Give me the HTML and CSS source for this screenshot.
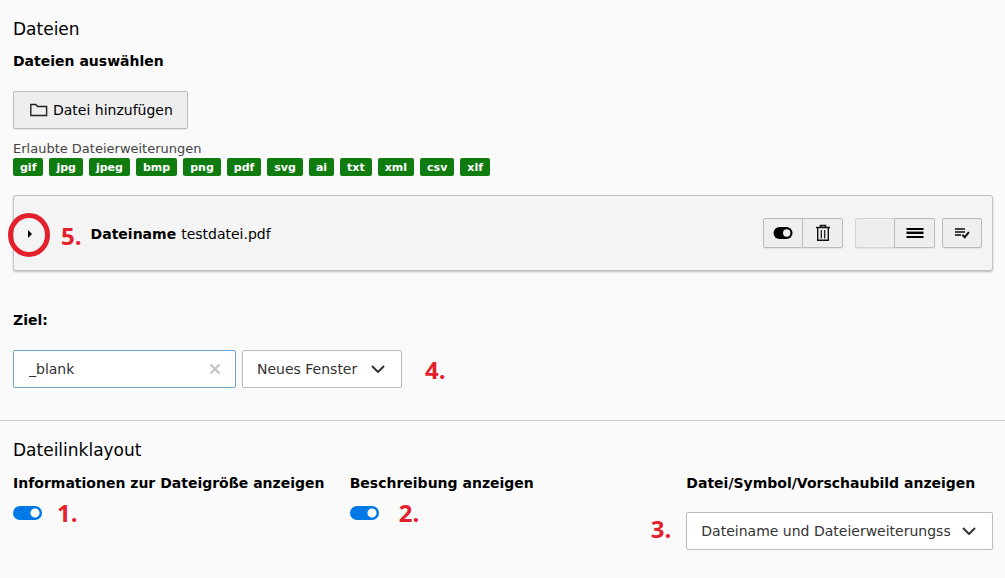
FILE: index.html
```
<!DOCTYPE html>
<html lang="de">
<head>
<meta charset="utf-8">
<meta name="viewport" content="width=device-width, initial-scale=1">
<title>Dateien</title>
<link rel="stylesheet" href="styles.css">
</head>
<body>
<section class="section">
  <h1 class="heading">Dateien</h1>
  <h2 class="label">Dateien auswählen</h2>
  <button class="btn add-file" type="button">
    <svg width="18" height="14" viewBox="0 0 18 14" fill="none" stroke="#222" stroke-width="1.4"><path d="M.8 1.5h5l1.8 2h9v9H.8z"/></svg>
    Datei hinzufügen
  </button>
  <p class="hint">Erlaubte Dateierweiterungen</p>
  <div class="badges">
    <span class="badge">gif</span><span class="badge">jpg</span><span class="badge">jpeg</span><span class="badge">bmp</span><span class="badge">png</span><span class="badge">pdf</span><span class="badge">svg</span><span class="badge">ai</span><span class="badge">txt</span><span class="badge">xml</span><span class="badge">csv</span><span class="badge">xlf</span>
  </div>

  <div class="panel">
    <button class="expand" type="button" aria-label="Aufklappen">
      <svg width="16" height="16" viewBox="0 0 16 16"><path d="M6 4l4 4-4 4z"/></svg>
    </button>
    <svg class="ring" width="44" height="46" viewBox="0 0 44 46" fill="none" stroke="#e3202b" stroke-width="5"><ellipse cx="22" cy="23" rx="18.5" ry="19.5"/></svg>
    <span class="mark">5.</span>
    <div class="file"><strong>Dateiname</strong><span>testdatei.pdf</span></div>
    <div class="actions">
      <div class="group">
        <button class="btn tool" type="button" aria-label="Deaktivieren"><svg width="20" height="14" viewBox="0 0 20 14"><rect x=".5" y="1" width="19" height="12" rx="6"/><circle cx="13.7" cy="7" r="3.7" fill="#eee"/></svg></button>
        <button class="btn tool" type="button" aria-label="Löschen"><svg width="16" height="18" viewBox="0 0 16 18" fill="none" stroke="#111"><path d="M1 3.5h14M5.5 3V1.5h5V3" stroke-width="1.6"/><path d="M2.7 4v12.3h10.6V4" stroke-width="1.4"/><path d="M6.3 6v8.5M9.7 6v8.5" stroke-width="1.2"/></svg></button>
      </div>
      <div class="group">
        <button class="btn tool" type="button" aria-label="Information" disabled></button>
        <button class="btn tool" type="button" aria-label="Verschieben"><svg width="18" height="12" viewBox="0 0 18 12"><path d="M.5 1h17v2H.5zM.5 5h17v2H.5zM.5 9h17v2H.5z"/><path d="M.5 4h17v1H.5z" fill="#888"/></svg></button>
      </div>
      <button class="btn tool" type="button" aria-label="Auswählen"><svg width="16" height="14" viewBox="0 0 16 14" fill="none" stroke="#444" stroke-width="2"><path d="M1 3h10M1 6h10M1 9h6"/><path d="M8.3 8.8l2.4 2.4 4.2-5" stroke="#111"/></svg></button>
    </div>
  </div>

  <label class="label" for="target">Ziel:</label>
  <div class="target-row">
    <div class="clearable">
      <input class="field" id="target" type="text" value="_blank">
      <button class="clear" type="button" aria-label="Leeren"><svg width="12" height="12" viewBox="0 0 12 12" stroke="#c4c4c4" stroke-width="2.2"><path d="M1.5 1.5l9 9M10.5 1.5l-9 9"/></svg></button>
    </div>
    <div class="select short">
      <select class="field" aria-label="Zielfenster"><option>Neues Fenster</option></select>
      <svg class="chevron" width="14" height="8" viewBox="0 0 14 8" fill="none" stroke="#333" stroke-width="2"><path d="M1 1l6 6 6-6"/></svg>
    </div>
    <span class="mark after">4.</span>
  </div>
</section>

<section class="section layout">
  <h1 class="heading">Dateilinklayout</h1>
  <div class="columns">
    <div>
      <label class="label" for="size">Informationen zur Dateigröße anzeigen</label>
      <div class="switch-row"><input class="switch" id="size" type="checkbox" role="switch" checked><span class="mark">1.</span></div>
    </div>
    <div>
      <label class="label" for="desc">Beschreibung anzeigen</label>
      <div class="switch-row wide"><input class="switch" id="desc" type="checkbox" role="switch" checked><span class="mark">2.</span></div>
    </div>
    <div>
      <label class="label" for="preview">Datei/Symbol/Vorschaubild anzeigen</label>
      <div class="select">
        <span class="mark before">3.</span>
        <select class="field" id="preview"><option>Dateiname und Dateierweiterungssymbol</option></select>
        <svg class="chevron" width="14" height="8" viewBox="0 0 14 8" fill="none" stroke="#333" stroke-width="2"><path d="M1 1l6 6 6-6"/></svg>
      </div>
    </div>
  </div>
</section>
</body>
</html>
```
FILE: styles.css
```
* { box-sizing: border-box; }

body {
  margin: 0;
  background: #fafafa;
  color: #000;
  font: 14px/20px Verdana, "DejaVu Sans", sans-serif;
}

button, input, select { font: inherit; color: inherit; margin: 0; }
svg { display: block; flex: none; }

.section { padding: 17px 12px 32px 13px; }
.layout { border-top: 1px solid #c8c8c8; }

.heading { margin: 0 0 10px; font-size: 17px; line-height: 24px; font-weight: 400; }
.label { display: block; margin: 0 0 20px; font-size: 14px; font-weight: 700; white-space: nowrap; }

.btn {
  display: flex;
  align-items: center;
  justify-content: center;
  background: #eee;
  border: 1px solid #bbb;
  border-radius: 2px;
}
.add-file { height: 38px; gap: 5px; padding: 0 14px 0 16px; box-shadow: 0 1px 1px #e4e4e4; }

.hint { margin: 10px 0 0; font-size: 13px; line-height: 19px; color: #444; }

.badges { display: flex; flex-wrap: wrap; gap: 6px; }
.badge {
  padding: 1px 7px 0;
  border-radius: 2px;
  background: #107c10;
  color: #fff;
  font-size: 11px;
  line-height: 17px;
  font-weight: 700;
}

.panel {
  position: relative;
  display: flex;
  align-items: center;
  height: 76px;
  margin: 19px 0 39px;
  padding: 0 10px 0 8px;
  background: #f4f4f4;
  border: 1px solid #c3c3c3;
  border-radius: 3px;
  box-shadow: 0 1px 2px #bbb;
}
.expand { padding: 2px 0 0; border: 0; background: none; }
.ring { position: absolute; left: -7px; top: 16px; pointer-events: none; }
.panel .mark { margin: 5px 9px 0 23px; }
.file { display: flex; flex: 1; gap: 5px; padding-top: 2px; }

.actions { display: flex; gap: 7px; }
.group { display: flex; }
.group:first-child { margin-right: 5px; }
.tool { width: 40px; height: 30px; padding: 0; box-shadow: 0 1px 1px #e4e4e4; }
.group .tool { width: 41px; }
.group .tool:first-child { width: 40px; border-radius: 2px 0 0 2px; }
.group .tool + .tool { margin-left: -1px; border-radius: 0 2px 2px 0; }
.tool:disabled { border-color: #d3d3d3; }

.mark { color: #e3202b; font: 700 24px/24px "Open Sans", sans-serif; }

.field {
  width: 100%;
  height: 38px;
  padding: 0 14px;
  background: #fff;
  border: 1px solid #bbb;
  border-radius: 2px;
  color: #333;
}
.target-row { display: flex; align-items: center; gap: 6px; }
.clearable { position: relative; width: 223px; }
.clearable .field { padding: 0 32px 0 15px; border-color: #6ba4cf; }
.clear { position: absolute; right: 15px; top: 13px; padding: 0; border: 0; background: none; }
.mark.after { margin: 2px 0 0 17px; }

.select { position: relative; }
.short { width: 160px; }
.select .field { appearance: none; padding-right: 42px; }
.chevron { position: absolute; right: 17px; top: 15px; pointer-events: none; }
.mark.before { position: absolute; right: 100%; top: 5px; margin-right: 15px; }

.layout .heading { margin-bottom: 11px; }
.columns { display: grid; grid-template-columns: repeat(3, minmax(0, 1fr)); column-gap: 30px; }
.columns .label { margin-bottom: 19px; }
.switch-row { display: flex; align-items: center; gap: 15px; height: 24px; margin-top: -11px; }
.switch-row.wide { gap: 20px; }
.switch {
  appearance: none;
  width: 29px;
  height: 14px;
  border-radius: 7px;
  background: radial-gradient(circle at 22px 7px, #fff 4px, transparent 5px) #0078e6;
}
```
